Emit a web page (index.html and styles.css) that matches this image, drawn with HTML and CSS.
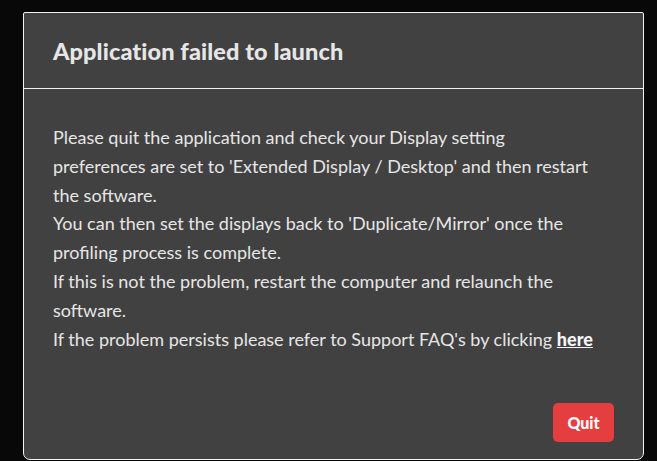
FILE: index.html
```html
<!DOCTYPE html>
<html lang="en">
<head>
<meta charset="utf-8">
<title>Application failed to launch</title>
<link rel="stylesheet" href="styles.css">
</head>
<body>
<div class="dialog">
  <div class="dialog-header">
    <h1 class="dialog-title">Application failed to launch</h1>
  </div>
  <div class="dialog-body">
    <p class="msg">Please quit the application and check your Display setting<br>preferences are set to 'Extended Display / Desktop' and then restart<br>the software.</p>
    <p class="msg">You can then set the displays back to 'Duplicate/Mirror' once the<br>profiling process is complete.</p>
    <p class="msg">If this is not the problem, restart the computer and relaunch the<br>software.</p>
    <p class="msg">If the problem persists please refer to Support FAQ's by clicking <a class="link" href="#">here</a></p>
  </div>
  <div class="dialog-footer">
    <button class="btn-quit" type="button">Quit</button>
  </div>
</div>
</body>
</html>
```

FILE: styles.css
```css
html, body {
  margin: 0;
  padding: 0;
  background: #080808;
  height: 100%;
  overflow: hidden;
}
body {
  font-family: Lato, "Liberation Sans", sans-serif;
  color: #e6e6e6;
  padding: 12px 13px 0 23px;
  box-sizing: border-box;
}
.dialog {
  background: #414141;
  border: 1px solid #f2f2f2;
  border-radius: 2px 2px 7px 7px;
  height: 448px;
  box-sizing: border-box;
  display: flex;
  flex-direction: column;
}
.dialog-header {
  height: 75px;
  border-bottom: 1px solid #f2f2f2;
  padding: 0 29px;
  display: flex;
  align-items: center;
}
.dialog-title {
  margin: 0;
  font-size: 23.5px;
  font-weight: 900;
  letter-spacing: 0.1px;
  color: #e6e6e6;
}
.dialog-body {
  padding: 34px 29px 0;
  flex: 1;
}
.msg {
  margin: 0;
  font-size: 18px;
  line-height: 28.8px;
}
.link {
  color: #f5f5f5;
  font-weight: 900;
  text-decoration: underline;
}
.dialog-footer {
  display: flex;
  justify-content: flex-end;
  padding: 0 29px 17px;
}
.btn-quit {
  width: 61px;
  height: 39px;
  border: none;
  border-radius: 5px;
  background: #e53e3e;
  color: #ffffff;
  font-family: Lato, "Liberation Sans", sans-serif;
  font-size: 16px;
  font-weight: 900;
  cursor: pointer;
}
```
